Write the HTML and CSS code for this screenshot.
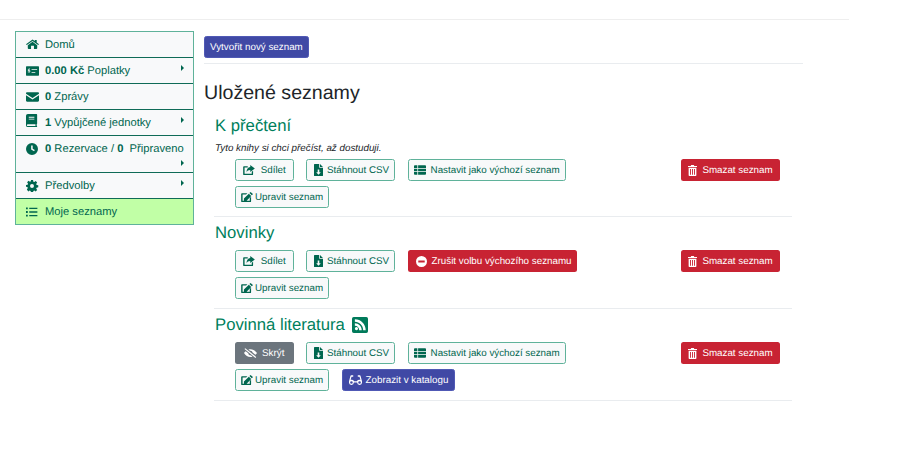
FILE: index.html
```html
<!DOCTYPE html>
<html lang="cs">
<head>
<meta charset="utf-8">
<title>Moje seznamy</title>
<link rel="stylesheet" href="styles.css">
</head>
<body>
<svg class="defs" width="0" height="0" aria-hidden="true">
  <defs>
    <symbol id="i-home" viewBox="0 0 16 14" preserveAspectRatio="none"><path d="M8 .6 10.800 2.900V1.500h2.400v3.400L16 7.200l-1 1.200L8 2.700 1 8.400 0 7.200zM8 4l5.800 4.700V13c0 .5-.4 1-1 1H9.800V9.600H6.200V14H3.200c-.6 0-1-.5-1-1V8.700z"/></symbol>
    <symbol id="i-money" viewBox="0 0 14 10"><path fill-rule="evenodd" d="M.6 0h12.800c.3 0 .6.300.6.600v8.800c0 .3-.3.600-.6.600H.6a.6.6 0 0 1-.6-.6V.6C0 .3.300 0 .6 0zM3 2v.8h-.2c-1.100 0-1.200 2 0 2.200h.9c.3.100.3.600 0 .6H2v.7h1V7h.8v-.8c1.200-.2 1.200-2 0-2.100h-.9c-.3-.1-.3-.6 0-.6h1.400v-.7h-.5V2zm3 1v1h6V3zm0 3v1h4V6z"/></symbol>
    <symbol id="i-mail" viewBox="0 0 14 10"><path d="M0 1.200C0 .5.500 0 1.200 0h11.600c.7 0 1.200.5 1.200 1.200v.3L7 6 0 1.500zM0 3.200 7 7.700l7-4.500v5.600c0 .7-.5 1.200-1.200 1.200H1.200C.5 10 0 9.500 0 8.800z"/></symbol>
    <symbol id="i-book" viewBox="0 0 12 14" preserveAspectRatio="xMinYMid meet"><path fill-rule="evenodd" d="M2 0h9.300c.4 0 .7.300.7.700v9.600c0 .3-.2.600-.5.700v1.700c.3.100.5.300.5.600v.1c0 .3-.3.600-.6.600H2a2 2 0 0 1-2-2V2a2 2 0 0 1 2-2zM3 3v1h6V3zm0 2v1h6V5zm-1 6a1 1 0 0 0 0 2h8.200v-2z"/></symbol>
    <symbol id="i-clock" viewBox="0 0 14 14" preserveAspectRatio="xMinYMid meet"><path fill-rule="evenodd" d="M7 0a7 7 0 1 1 0 14A7 7 0 0 1 7 0zM6 3v4.600l3.400 2 .9-1.300L7.800 6.800V3z"/></symbol>
    <symbol id="i-cog" viewBox="0 0 14 14" preserveAspectRatio="xMinYMid meet"><path fill-rule="evenodd" d="M5.800 0h2.400l.4 1.900 1.100.5 1.600-1.100 1.700 1.700-1.100 1.600.5 1.100 1.900.4v2.400l-1.900.4-.5 1.100 1.100 1.600-1.700 1.700-1.600-1.100-1.100.5-.4 1.900H5.800l-.4-1.900-1.100-.5-1.600 1.100L1 11l1.100-1.600-.5-1.100L0 8V5.800l1.900-.4.5-1.100L1.300 2.700 3 1l1.600 1.100 1.100-.5zM7 4.700a2.300 2.300 0 1 0 0 4.600 2.300 2.300 0 0 0 0-4.600z"/></symbol>
    <symbol id="i-list" viewBox="0 0 16 12" preserveAspectRatio="xMinYMid meet"><path d="M0 .5h2.200v2.200H0zM0 4.900h2.200v2.200H0zM0 9.300h2.200v2.200H0zM4 .8h10v1.600H4zM4 5.200h10v1.600H4zM4 9.600h10v1.600H4z"/></symbol>
    <symbol id="i-share" viewBox="0 0 14 12"><path d="M8.500 0 14 4.200 8.500 8.400V6C6.200 6 4.800 6.900 4.200 9 3.800 5.200 5.600 3 8.500 2.500zM1 1.500h4.500v1.600H1.700v7.300h8.600V8.200l1.600-1.200V11a1 1 0 0 1-1 1H1a1 1 0 0 1-1-1V2.500a1 1 0 0 1 1-1z"/></symbol>
    <symbol id="i-csv" viewBox="0 0 9 12"><path fill-rule="evenodd" d="M.6 0H5.200v3.200c0 .3.300.6.600.6H9v7.600c0 .3-.3.600-.6.600H.6a.6.6 0 0 1-.6-.6V.6C0 .3.300 0 .6 0zM6 0l3 3H6zM3.700 5.500v2.700H2.200l2.300 2.500 2.300-2.500H5.300V5.500z"/></symbol>
    <symbol id="i-table" viewBox="0 0 14 11"><path d="M1 0h2.900v3.200H0V1a1 1 0 0 1 1-1zM4.800 0H13a1 1 0 0 1 1 1v2.200H4.800zM0 4h3.900v3H0zM4.800 4H14v3H4.800zM0 7.800h3.900V11H1a1 1 0 0 1-1-1zM4.800 7.800H14V10a1 1 0 0 1-1 1H4.800z"/></symbol>
    <symbol id="i-edit" viewBox="0 0 14 12"><path d="M11.200 0a.6.6 0 0 1 .4.200l2.200 2a.6.6 0 0 1 0 .8l-1 1-2.900-2.800 1-1a.6.6 0 0 1 .3-.2zM9.200 2 12.100 4.900 6.200 10.800H3.300V7.900zM1 1.500h6.500L5.900 3.100H1.700v7.300h8.600V7.200l1.600-1.600V11a1 1 0 0 1-1 1H1a1 1 0 0 1-1-1V2.500a1 1 0 0 1 1-1z"/></symbol>
    <symbol id="i-trash" viewBox="0 0 10 12"><path fill-rule="evenodd" d="M3.500 0h3l.5 1h3v1.200H0V1h3zM.7 3h8.600v8.200c0 .4-.3.8-.8.8h-7c-.5 0-.8-.4-.8-.8zm1.600 1.200v6.500h1V4.200zm2.200 0v6.500h1V4.200zm2.200 0v6.500h1V4.200z"/></symbol>
    <symbol id="i-minus" viewBox="0 0 12 12"><path fill-rule="evenodd" d="M6 0a6 6 0 1 1 0 12A6 6 0 0 1 6 0zM2.500 4.800v2.400h7V4.800z"/></symbol>
    <symbol id="i-rss" viewBox="0 0 14 14"><path fill-rule="evenodd" d="M1.500 0h11A1.500 1.500 0 0 1 14 1.500v11a1.500 1.500 0 0 1-1.500 1.500h-11A1.500 1.500 0 0 1 0 12.500v-11A1.500 1.500 0 0 1 1.500 0zM2.500 2v2.200c4 0 7.300 3.300 7.300 7.300H12C12 6.300 7.700 2 2.500 2zM2.500 5.500v2.200c2.100 0 3.800 1.700 3.800 3.800h2.200c0-3.300-2.700-6-6-6zM3.900 8.700a1.400 1.400 0 1 0 0 2.800 1.400 1.400 0 0 0 0-2.800z"/></symbol>
    <symbol id="i-eyeoff" viewBox="0 0 16 12"><path d="M1.500 0 15 10.800l-.9 1.200L.6 1.200zM8 1.500c3.300 0 6 2 8 4.500-.6.800-1.200 1.500-2 2.100L10.600 5.400A2.800 2.800 0 0 0 7.700 3.100L5.500 2C6.300 1.700 7.100 1.500 8 1.500zM0 6c.6-.8 1.300-1.500 2.100-2.100l3.100 2.500A2.800 2.800 0 0 0 8.300 8.900l2.200 1.700c-.8.300-1.600.4-2.500.4C4.700 11 2 9 0 6z"/></symbol>
    <symbol id="i-glasses" viewBox="0 0 16 12"><path fill-rule="evenodd" d="M3.300.3h1.900v1.600H3.600c-.3 0-.5.200-.6.500L2 5.800A4 4 0 0 1 6.400 7.400h3.200A4 4 0 0 1 14 5.800L13 2.400c-.1-.3-.3-.5-.6-.5h-1.600V.3h1.900c.8 0 1.500.5 1.700 1.300L16 7.500V9a3 3 0 0 1-6 .2H6A3 3 0 0 1 0 9V7.500l1.600-5.900C1.800.8 2.500.3 3.300.3zM3 7.400a1.600 1.600 0 0 0 0 3.200 1.600 1.600 0 0 0 0-3.200zm10 0a1.600 1.600 0 0 0 0 3.200 1.600 1.600 0 0 0 0-3.200z"/></symbol>
  </defs>
</svg>

<div class="topline"></div>

<div class="page">
  <nav class="side">
    <a class="side-item">
      <svg class="side-ico side-ico-home"><use href="#i-home"/></svg><span>Domů</span>
    </a>
    <a class="side-item">
      <svg class="side-ico"><use href="#i-money"/></svg><span><b>0.00 Kč</b> Poplatky</span><i class="arrow"></i>
    </a>
    <a class="side-item">
      <svg class="side-ico"><use href="#i-mail"/></svg><span><b>0</b> Zprávy</span>
    </a>
    <a class="side-item">
      <svg class="side-ico side-ico-book"><use href="#i-book"/></svg><span><b>1</b> Vypůjčené jednotky</span><i class="arrow"></i>
    </a>
    <a class="side-item tall">
      <svg class="side-ico"><use href="#i-clock"/></svg><span><b>0</b> Rezervace / <b>0</b>&nbsp; Připraveno</span><i class="arrow arrow-low"></i>
    </a>
    <a class="side-item">
      <svg class="side-ico"><use href="#i-cog"/></svg><span>Předvolby</span><i class="arrow"></i>
    </a>
    <a class="side-item active">
      <svg class="side-ico"><use href="#i-list"/></svg><span>Moje seznamy</span>
    </a>
  </nav>

  <main class="main">
    <div class="toolbar">
      <a class="btn btn-blue btn-new">Vytvořit nový seznam</a>
    </div>
    <h1 class="title">Uložené seznamy</h1>

    <section class="list">
      <h2 class="list-name">K přečtení</h2>
      <p class="list-desc">Tyto knihy si chci přečíst, až dostuduji.</p>
      <div class="actions">
        <div class="actions-main">
          <a class="btn btn-line btn-first"><svg class="ico ico-share"><use href="#i-share"/></svg>Sdílet</a>
          <a class="btn btn-line"><svg class="ico ico-csv"><use href="#i-csv"/></svg>Stáhnout CSV</a>
          <a class="btn btn-line"><svg class="ico ico-table"><use href="#i-table"/></svg>Nastavit jako výchozí seznam</a>
          <a class="btn btn-line"><svg class="ico ico-edit"><use href="#i-edit"/></svg>Upravit seznam</a>
        </div>
        <a class="btn btn-red btn-delete"><svg class="ico ico-trash"><use href="#i-trash"/></svg>Smazat seznam</a>
      </div>
    </section>

    <section class="list">
      <h2 class="list-name list-name-plain">Novinky</h2>
      <div class="actions">
        <div class="actions-main">
          <a class="btn btn-line btn-first"><svg class="ico ico-share"><use href="#i-share"/></svg>Sdílet</a>
          <a class="btn btn-line"><svg class="ico ico-csv"><use href="#i-csv"/></svg>Stáhnout CSV</a>
          <a class="btn btn-red btn-unset"><svg class="ico ico-minus"><use href="#i-minus"/></svg>Zrušit volbu výchozího seznamu</a>
          <a class="btn btn-line"><svg class="ico ico-edit"><use href="#i-edit"/></svg>Upravit seznam</a>
        </div>
        <a class="btn btn-red btn-delete"><svg class="ico ico-trash"><use href="#i-trash"/></svg>Smazat seznam</a>
      </div>
    </section>

    <section class="list">
      <h2 class="list-name list-name-plain">Povinná literatura <svg class="rss"><use href="#i-rss"/></svg></h2>
      <div class="actions">
        <div class="actions-main">
          <a class="btn btn-grey btn-first"><svg class="ico ico-eye ico-hide"><use href="#i-eyeoff"/></svg>Skrýt</a>
          <a class="btn btn-line"><svg class="ico ico-csv"><use href="#i-csv"/></svg>Stáhnout CSV</a>
          <a class="btn btn-line"><svg class="ico ico-table"><use href="#i-table"/></svg>Nastavit jako výchozí seznam</a>
          <a class="btn btn-line"><svg class="ico ico-edit"><use href="#i-edit"/></svg>Upravit seznam</a>
          <a class="btn btn-blue"><svg class="ico ico-eye"><use href="#i-glasses"/></svg>Zobrazit v katalogu</a>
        </div>
        <a class="btn btn-red btn-delete"><svg class="ico ico-trash"><use href="#i-trash"/></svg>Smazat seznam</a>
      </div>
    </section>
  </main>
</div>
</body>
</html>
```

FILE: styles.css
```css
* { box-sizing: border-box; }
html, body { margin: 0; padding: 0; }
body {
  width: 900px;
  height: 471px;
  overflow: hidden;
  background: #fff;
  color: #212529;
  font-family: "Liberation Sans", Arial, sans-serif;
  font-size: 11px;
  line-height: 16px;
  text-rendering: geometricPrecision;
}
.defs { position: absolute; }
.topline {
  width: 849px;
  height: 20px;
  border-bottom: 1px solid #eeeeee;
}
.page {
  display: flex;
  align-items: flex-start;
  padding: 11px 0 0 15px;
}

/* sidebar */
.side {
  flex: 0 0 179px;
  width: 179px;
  border: 1px solid #5fb29a;
  background: #f8f9fa;
  color: #00664f;
  font-size: 11.2px;
}
.side-item {
  position: relative;
  display: flex;
  align-items: flex-start;
  min-height: 26px;
  padding: 5px 0 4px 10px;
  border-bottom: 1px solid #0f6b57;
  line-height: 16px;
  white-space: nowrap;
}
.side-item:last-child { border-bottom: 0; min-height: 25px; }
.side-item.tall { height: 37px; }
.side-item.active { background: #c1ffa6; }
.side-ico {
  flex: 0 0 13px;
  width: 13px;
  height: 12px;
  margin: 2px 6px 0 0;
  fill: #00664f;
}
.side-ico-home { height: 10px; }
.side-ico-book { height: 13px; margin-top: -1px; }
.arrow {
  position: absolute;
  right: 9px;
  top: 7px;
  width: 0;
  height: 0;
  border-left: 3px solid #00664f;
  border-top: 3px solid transparent;
  border-bottom: 3px solid transparent;
}
.arrow-low { top: 24px; }

/* main */
.main {
  flex: 0 0 599px;
  width: 599px;
  margin-left: 10px;
  padding-top: 5px;
}
.toolbar {
  height: 28px;
  border-bottom: 1px solid #e9ecef;
}
.title {
  margin: 17px 0 5px;
  font-size: 19.6px;
  font-weight: 400;
  line-height: 24px;
  color: #212529;
}
.list {
  width: 578px;
  margin-left: 10px;
  padding-bottom: 9px;
  border-bottom: 1px solid #e9ecef;
}
.list-name {
  display: flex;
  align-items: center;
  gap: 7px;
  margin: 0;
  padding: 5px 0 0 1px;
  font-size: 16.7px;
  font-weight: 400;
  line-height: 21px;
  color: #007f5c;
}
.list-desc {
  margin: 6px 0 0;
  padding-left: 1px;
  font-size: 9.8px;
  font-style: italic;
  line-height: 14px;
  color: #212529;
}
.list-name-plain { margin-bottom: 7px; }
.rss { width: 16px; height: 16px; fill: #007a5a; }

.actions {
  display: flex;
  align-items: flex-start;
  padding-left: 21px;
}
.list-desc + .actions { margin: 3px 0 -1px; }
.actions-main {
  flex: 0 0 432px;
  width: 432px;
  margin-right: 14px;
  display: flex;
  flex-wrap: wrap;
  gap: 5px 12.5px;
}

.btn {
  display: inline-flex;
  align-items: center;
  justify-content: center;
  height: 22px;
  padding: 2px 5px 0;
  border: 1px solid transparent;
  border-radius: 2.5px;
  font-size: 9.8px;
  white-space: nowrap;
}
.btn-blue { background: #4049a5; border-color: #5059b5; color: #fff; padding: 2px 6px 0; }
.btn-new { padding: 2px 5px 0; }
.btn-red { background: #c82333; color: #fff; padding: 2px 6px 0; }
.btn-unset { padding: 2px 4px 0 7px; }
.btn-grey { background: #6c757d; color: #fff; }
.btn-line { background: #f8f9fa; border-color: #5fb29a; color: #00664f; }
.btn-first { width: 58.5px; }
.btn-delete { width: 99px; }

.ico { margin: -2px 4px 0 0; fill: currentColor; flex: none; }
.ico-share { width: 12px; height: 10px; margin-right: 6px; }
.ico-csv { width: 9px; height: 12px; margin-left: 2px; }
.ico-table { width: 12px; height: 10px; margin-right: 5px; }
.ico-minus { width: 11px; height: 11px; margin-right: 5px; }
.ico-edit { width: 12px; height: 10px; margin-right: 2px; }
.ico-trash { width: 9px; height: 11px; margin-right: 5px; }
.ico-eye { width: 13px; height: 10px; }
.ico-hide { margin-right: 5px; }
```
